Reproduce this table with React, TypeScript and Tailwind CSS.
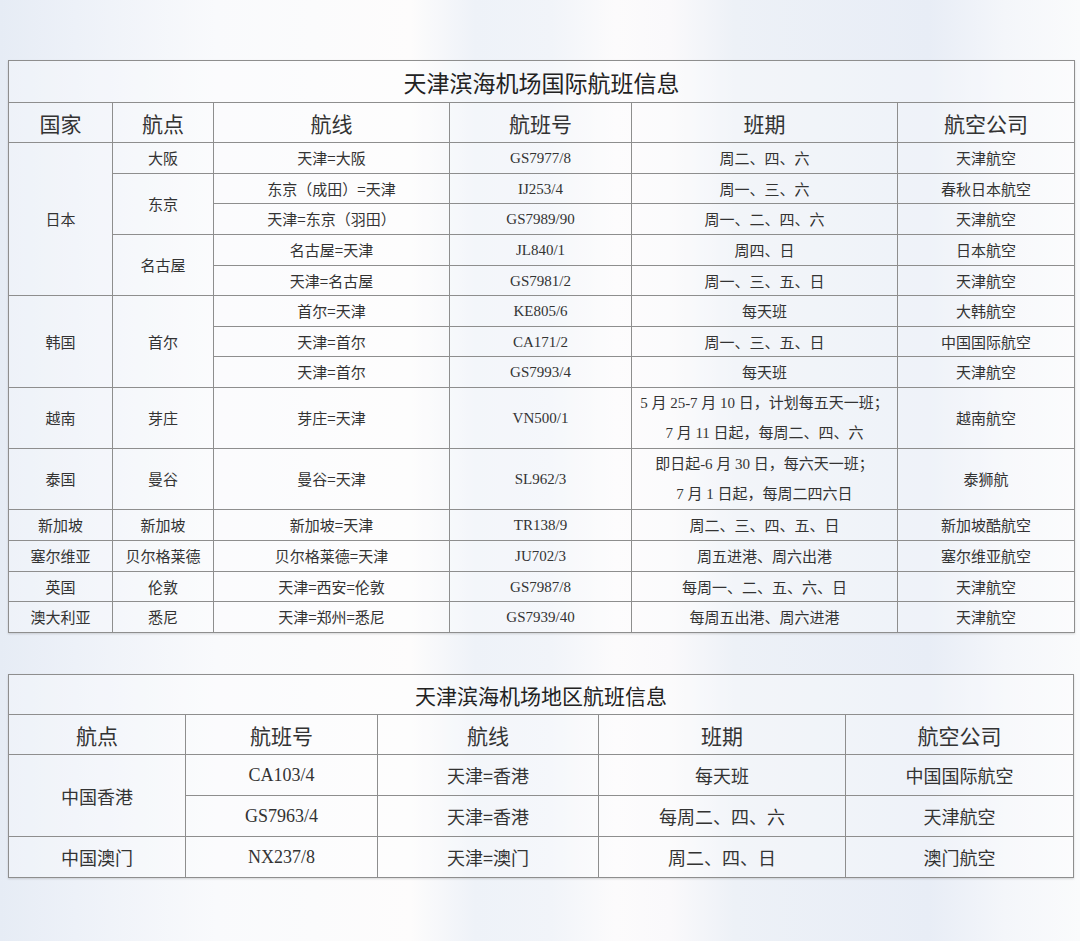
const border = "border border-[#8e8e8e]";

function Td({
  children,
  rowSpan,
  colSpan,
  className = "",
}: {
  children: React.ReactNode;
  rowSpan?: number;
  colSpan?: number;
  className?: string;
}) {
  return (
    <td rowSpan={rowSpan} colSpan={colSpan} className={`${border} text-center align-middle p-0 ${className}`}>
      {children}
    </td>
  );
}

const code = "font-['Liberation_Serif','Noto_Sans_CJK_SC',serif]";

type Row = {
  cells: { text: React.ReactNode; rowSpan?: number; code?: boolean }[];
  h: string;
};

const intlRows: Row[] = [
  {
    h: "h-[31px]",
    cells: [
      { text: "日本", rowSpan: 5 },
      { text: "大阪" },
      { text: "天津=大阪" },
      { text: "GS7977/8", code: true },
      { text: "周二、四、六" },
      { text: "天津航空" },
    ],
  },
  {
    h: "h-[30px]",
    cells: [
      { text: "东京", rowSpan: 2 },
      { text: "东京（成田）=天津" },
      { text: "IJ253/4", code: true },
      { text: "周一、三、六" },
      { text: "春秋日本航空" },
    ],
  },
  {
    h: "h-[31px]",
    cells: [
      { text: "天津=东京（羽田）" },
      { text: "GS7989/90", code: true },
      { text: "周一、二、四、六" },
      { text: "天津航空" },
    ],
  },
  {
    h: "h-[31px]",
    cells: [
      { text: "名古屋", rowSpan: 2 },
      { text: "名古屋=天津" },
      { text: "JL840/1", code: true },
      { text: "周四、日" },
      { text: "日本航空" },
    ],
  },
  {
    h: "h-[30px]",
    cells: [
      { text: "天津=名古屋" },
      { text: "GS7981/2", code: true },
      { text: "周一、三、五、日" },
      { text: "天津航空" },
    ],
  },
  {
    h: "h-[31px]",
    cells: [
      { text: "韩国", rowSpan: 3 },
      { text: "首尔", rowSpan: 3 },
      { text: "首尔=天津" },
      { text: "KE805/6", code: true },
      { text: "每天班" },
      { text: "大韩航空" },
    ],
  },
  {
    h: "h-[30px]",
    cells: [
      { text: "天津=首尔" },
      { text: "CA171/2", code: true },
      { text: "周一、三、五、日" },
      { text: "中国国际航空" },
    ],
  },
  {
    h: "h-[31px]",
    cells: [
      { text: "天津=首尔" },
      { text: "GS7993/4", code: true },
      { text: "每天班" },
      { text: "天津航空" },
    ],
  },
  {
    h: "h-[61px]",
    cells: [
      { text: "越南" },
      { text: "芽庄" },
      { text: "芽庄=天津" },
      { text: "VN500/1", code: true },
      {
        text: (
          <span className="block leading-[30px]">
            5 月 25-7 月 10 日，计划每五天一班；
            <br />7 月 11 日起，每周二、四、六
          </span>
        ),
        code: true,
      },
      { text: "越南航空" },
    ],
  },
  {
    h: "h-[61px]",
    cells: [
      { text: "泰国" },
      { text: "曼谷" },
      { text: "曼谷=天津" },
      { text: "SL962/3", code: true },
      {
        text: (
          <span className="block leading-[30px]">
            即日起-6 月 30 日，每六天一班；
            <br />7 月 1 日起，每周二四六日
          </span>
        ),
        code: true,
      },
      { text: "泰狮航" },
    ],
  },
  {
    h: "h-[31px]",
    cells: [
      { text: "新加坡" },
      { text: "新加坡" },
      { text: "新加坡=天津" },
      { text: "TR138/9", code: true },
      { text: "周二、三、四、五、日" },
      { text: "新加坡酷航空" },
    ],
  },
  {
    h: "h-[31px]",
    cells: [
      { text: "塞尔维亚" },
      { text: "贝尔格莱德" },
      { text: "贝尔格莱德=天津" },
      { text: "JU702/3", code: true },
      { text: "周五进港、周六出港" },
      { text: "塞尔维亚航空" },
    ],
  },
  {
    h: "h-[30px]",
    cells: [
      { text: "英国" },
      { text: "伦敦" },
      { text: "天津=西安=伦敦" },
      { text: "GS7987/8", code: true },
      { text: "每周一、二、五、六、日" },
      { text: "天津航空" },
    ],
  },
  {
    h: "h-[31px]",
    cells: [
      { text: "澳大利亚" },
      { text: "悉尼" },
      { text: "天津=郑州=悉尼" },
      { text: "GS7939/40", code: true },
      { text: "每周五出港、周六进港" },
      { text: "天津航空" },
    ],
  },
];

const regionRows: Row[] = [
  {
    h: "h-[41px]",
    cells: [
      { text: "中国香港", rowSpan: 2 },
      { text: "CA103/4", code: true },
      { text: "天津=香港" },
      { text: "每天班" },
      { text: "中国国际航空" },
    ],
  },
  {
    h: "h-[41px]",
    cells: [
      { text: "GS7963/4", code: true },
      { text: "天津=香港" },
      { text: "每周二、四、六" },
      { text: "天津航空" },
    ],
  },
  {
    h: "h-[41px]",
    cells: [
      { text: "中国澳门" },
      { text: "NX237/8", code: true },
      { text: "天津=澳门" },
      { text: "周二、四、日" },
      { text: "澳门航空" },
    ],
  },
];

export default function App() {
  return (
    <div className="w-[1080px] h-[941px] overflow-hidden pt-[60px] pl-[8px] text-[#333] font-['Noto_Sans_CJK_SC',sans-serif] bg-[linear-gradient(90deg,#e6ecf5_0%,#edf1f8_7%,#f9fafc_20%,#fdfcfc_38%,#eef2f8_44%,#f1f4f9_51%,#fcfbfc_57%,#faf9fb_62%,#edf1f7_68%,#e8edf6_86%,#f4f6fa_93%,#fafbfc_100%)]">
      {/* 国际航班 */}
      <table className="table-fixed border-collapse w-[1066px] bg-white/30 shadow-[0_1px_2px_rgba(0,0,0,0.15)]">
        <colgroup>
          <col className="w-[104px]" />
          <col className="w-[101px]" />
          <col className="w-[236px]" />
          <col className="w-[182px]" />
          <col className="w-[266px]" />
          <col className="w-[177px]" />
        </colgroup>
        <tbody>
          <tr className="h-[42px] leading-[30px]">
            <Td colSpan={6} className="text-[23px] text-[#222]">
              天津滨海机场国际航班信息
            </Td>
          </tr>
          <tr className="h-[40px] text-[21px] leading-[28px]">
            <Td>国家</Td>
            <Td>航点</Td>
            <Td>航线</Td>
            <Td>航班号</Td>
            <Td>班期</Td>
            <Td>航空公司</Td>
          </tr>
          {intlRows.map((row, i) => (
            <tr key={i} className={`${row.h} text-[15px] leading-[20px]`}>
              {row.cells.map((c, j) => (
                <Td key={j} rowSpan={c.rowSpan} className={c.code ? code : ""}>
                  {c.text}
                </Td>
              ))}
            </tr>
          ))}
        </tbody>
      </table>

      {/* 地区航班 */}
      <table className="mt-[41px] table-fixed border-collapse w-[1065px] bg-white/30 shadow-[0_1px_2px_rgba(0,0,0,0.15)]">
        <colgroup>
          <col className="w-[177px]" />
          <col className="w-[192px]" />
          <col className="w-[221px]" />
          <col className="w-[247px]" />
          <col className="w-[228px]" />
        </colgroup>
        <tbody>
          <tr className="h-[40px] leading-[28px]">
            <Td colSpan={5} className="text-[21px] text-[#222]">
              天津滨海机场地区航班信息
            </Td>
          </tr>
          <tr className="h-[40px] text-[21px] leading-[28px]">
            <Td>航点</Td>
            <Td>航班号</Td>
            <Td>航线</Td>
            <Td>班期</Td>
            <Td>航空公司</Td>
          </tr>
          {regionRows.map((row, i) => (
            <tr key={i} className={`${row.h} text-[18px] leading-[24px]`}>
              {row.cells.map((c, j) => (
                <Td key={j} rowSpan={c.rowSpan} className={c.code ? code : ""}>
                  {c.text}
                </Td>
              ))}
            </tr>
          ))}
        </tbody>
      </table>
    </div>
  );
}
